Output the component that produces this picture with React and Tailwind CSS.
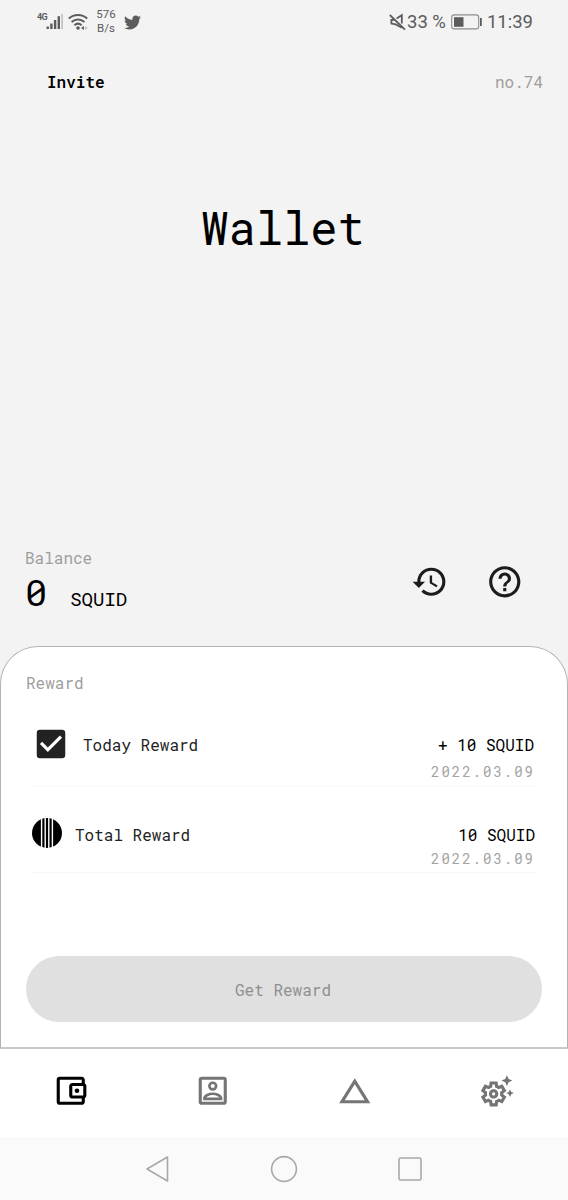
import {
  MdChangeHistory,
  MdCheckBox,
  MdHelpOutline,
  MdHistory,
  MdOutlineAccountBalanceWallet,
  MdOutlineSettingsSuggest,
} from "react-icons/md";
import { FaTwitter } from "react-icons/fa";

const mono = "font-['Roboto_Mono','Liberation_Mono',monospace]";

function PortraitIcon({ className }) {
  return (
    <svg className={className} viewBox="0 0 24 24" fill="none" stroke="currentColor">
      <rect x="4" y="4" width="16" height="16" rx="1" strokeWidth="2" />
      <circle cx="12" cy="9" r="2.15" strokeWidth="1.7" />
      <path d="M6.7 17.2h10.6v-.4c0-1.7-3.1-2.9-5.3-2.9s-5.3 1.2-5.3 2.9z" strokeWidth="1.7" />
    </svg>
  );
}

const tabs = [
  { id: "wallet", Icon: MdOutlineAccountBalanceWallet, color: "text-black" },
  { id: "profile", Icon: PortraitIcon, color: "text-[#757575]" },
  { id: "squid", Icon: MdChangeHistory, color: "text-[#757575]" },
  { id: "settings", Icon: MdOutlineSettingsSuggest, color: "text-[#757575]" },
];

function StatusBar() {
  return (
    <div className="flex h-11 items-center justify-between pl-9 pr-[35px] font-[Roboto,sans-serif] text-[#5c5c5c]">
      <div className="flex items-center">
        {/* Signal */}
        <span className="-mt-2.5 ml-px w-2.5 text-[9px] font-bold leading-none tracking-[-0.6px]">4G</span>
        <svg className="-ml-px h-4 w-[18px]" viewBox="0 0 18 16" fill="currentColor">
          <rect x="0.5" y="12.5" width="2.4" height="2.5" />
          <rect x="4.2" y="9.5" width="2.4" height="5.5" />
          <rect x="7.9" y="6" width="2.4" height="9" />
          <rect x="11.6" y="2.2" width="2.4" height="12.8" />
          <rect x="15.2" y="0" width="1.8" height="15" opacity=".3" />
        </svg>
        {/* Wifi */}
        <svg className="ml-1 h-[18px] w-5" viewBox="0 0 20 18" fill="none" stroke="currentColor" strokeWidth="2">
          <path d="M.8 5.6C6 .8 14 .8 19.2 5.6" />
          <path d="M3.6 9c3.8-3.4 9-3.4 12.8 0" />
          <path d="M6.4 12.2c2.2-1.9 5-1.9 7.2 0" />
          <circle cx="10" cy="15" r="1.8" fill="currentColor" stroke="none" />
          <path d="M16 13v4l-3-2z" fill="currentColor" stroke="none" />
          <path d="M17 13v4l3-2z" fill="currentColor" stroke="none" opacity=".3" />
        </svg>
        <div className="-mt-0.5 ml-2 w-5 text-center text-[11.5px] leading-[14px]">
          <div>576</div>
          <div>B/s</div>
        </div>
        <FaTwitter className="ml-2 h-[17px] w-[17px]" />
      </div>

      <div className="flex items-center text-[18.5px]">
        {/* Muted */}
        <svg className="h-[18px] w-[17px]" viewBox="0 0 17 18" fill="none" stroke="currentColor" strokeWidth="1.8">
          <path d="M7.6 5.6 12.8 2.2v8.4M12.8 14.8 6.8 11.4 2.4 10.6V6.8h3.4" />
          <path d="M.8 2 16 16.6" />
        </svg>
        <span className="ml-px">33 %</span>
        <svg className="ml-[5px] h-4 w-[31px]" viewBox="0 0 31 16">
          <rect x=".7" y=".9" width="27" height="14" rx="2.5" fill="none" stroke="#8c8c8c" strokeWidth="1.1" />
          <rect x="3" y="3.2" width="9.5" height="9.6" fill="#5c5c5c" />
          <rect x="29" y="4" width="1.8" height="8" fill="#5c5c5c" />
        </svg>
        <span className="ml-[5px]">11:39</span>
      </div>
    </div>
  );
}

function StripedCircle() {
  return (
    <svg className="h-[30px] w-[30px]" viewBox="0 0 30 30">
      <circle cx="15" cy="15" r="15" fill="#000" />
      <path d="M9.6 0v30M13.2 0v30M16.8 0v30M20.4 0v30" stroke="#fff" strokeWidth="1.4" />
    </svg>
  );
}

export default function App() {
  return (
    <div className={`flex h-[1200px] w-[568px] flex-col overflow-hidden bg-[#f3f3f3] text-base leading-5 text-black ${mono}`}>
      <StatusBar />

      {/* Header */}
      <header className="flex h-[76px] items-center justify-between pl-[47px] pr-[25px]">
        <span className="font-semibold">Invite</span>
        <span className="text-[#9e9e9e]">no.74</span>
      </header>

      <h1 className="mt-[77px] pr-0.5 text-center text-[45.5px] leading-[60px]">Wallet</h1>

      {/* Balance */}
      <section className="mt-auto flex h-[98px] justify-between pl-[25px] pr-[45px]">
        <div>
          <p className="text-[#9e9e9e]">Balance</p>
          <div className="mt-[3px] flex items-baseline">
            <span className="text-[37px] leading-[42px]">0</span>
            <span className="ml-[23px] text-[19px]">SQUID</span>
          </div>
        </div>
        <div className="mt-[15px] flex gap-[37.5px] text-[#1c1c1c]">
          <MdHistory className="h-[37.5px] w-[37.5px]" />
          <MdHelpOutline className="h-[37.5px] w-[37.5px]" />
        </div>
      </section>

      {/* Rewards */}
      <section className="flex h-[403px] shrink-0 flex-col rounded-t-[38px] border border-b-2 border-[#b3b3b3] border-b-[#c8c8c8] bg-white px-[25px] pb-[25px] pt-[26px]">
        <p className="text-[#9e9e9e]">Reward</p>

        <div className="ml-[6px] mr-1.5 flex h-[94px] justify-between border-b border-[#f7f7f7]">
          <div className="mt-8 flex h-[38px] items-center gap-[13px] text-[#222]">
            <MdCheckBox className="h-[38px] w-[38px]" />
            <span className="mt-0.5">Today Reward</span>
          </div>
          <div className="flex flex-col justify-end pb-1 text-right">
            <span className="mr-0.5">+ 10 SQUID</span>
            <span className="mr-px mt-[7px] text-[14px] tracking-[2px] text-[#a3a3a3]">2022.03.09</span>
          </div>
        </div>

        <div className="ml-[6px] mr-1.5 flex h-[86px] justify-between border-b border-[#f7f7f7]">
          <div className="mt-[31px] flex h-[30px] items-center gap-[13px] text-[#222]">
            <StripedCircle />
            <span className="mt-1">Total Reward</span>
          </div>
          <div className="flex flex-col justify-end pb-[3px] text-right">
            <span className="mr-px">10 SQUID</span>
            <span className="mr-px mt-1 text-[14px] tracking-[2px] text-[#a3a3a3]">2022.03.09</span>
          </div>
        </div>

        <button className="mt-auto h-[66px] w-full rounded-full bg-[#e0e0e0] pr-0.5 pt-0.5 text-[#8f8f8f]">
          Get Reward
        </button>
      </section>

      {/* Tabs */}
      <nav className="grid h-[88px] shrink-0 grid-cols-4 bg-white">
        {tabs.map(({ id, Icon, color }) => (
          <button key={id} className={`flex items-center justify-center pb-1 ${color}`}>
            <Icon className="h-[37.5px] w-[37.5px]" />
          </button>
        ))}
      </nav>

      {/* System navigation */}
      <div className="flex h-[63px] shrink-0 items-center justify-center gap-[100px] bg-[#fafafa] pr-0.5">
        <svg className="h-7 w-6" viewBox="0 0 24 28" fill="none" stroke="#a8a8a8" strokeWidth="1.6" strokeLinejoin="round">
          <path d="M22.5 2v24L2 14z" />
        </svg>
        <svg className="ml-px h-7 w-7" viewBox="0 0 28 28" fill="none" stroke="#a8a8a8" strokeWidth="1.6">
          <circle cx="14" cy="14" r="12.4" />
        </svg>
        <svg className="h-6 w-6" viewBox="0 0 24 24" fill="none" stroke="#a8a8a8" strokeWidth="1.6">
          <rect x="1" y="1" width="22" height="22" rx="1.5" />
        </svg>
      </div>
    </div>
  );
}
